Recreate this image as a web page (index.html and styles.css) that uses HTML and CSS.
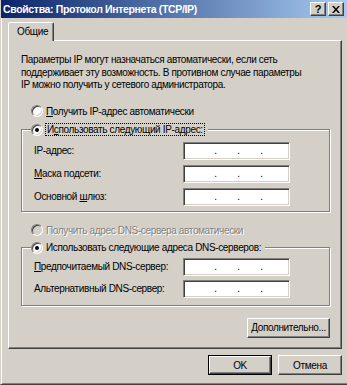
FILE: index.html
```html
<!DOCTYPE html>
<html lang="ru">
<head>
  <meta charset="UTF-8">
  <title>Свойства: Протокол Интернета (TCP/IP)</title>
  <link rel="stylesheet" href="styles.css">
</head>
<body>
  <div class="window">
    <div class="titlebar">
      <span class="title">Свойства: Протокол Интернета (TCP/IP)</span>
      <div class="tbtns">
        <span class="tbtn help">?</span>
        <span class="tbtn">
          <svg width="8" height="7" viewBox="0 0 8 7"><path d="M0 0h2l2 2.5L6 0h2L5 3.5 8 7H6L4 4.5 2 7H0l3-3.5z" fill="#000"/></svg>
        </span>
      </div>
    </div>

    <div class="content">
      <div class="tabs"><div class="tab">Общие</div></div>

      <div class="panel">
        <p class="info">Параметры IP могут назначаться автоматически, если сеть<br>поддерживает эту возможность. В противном случае параметры<br>IP можно получить у сетевого администратора.</p>

        <label class="radio-row"><span class="radio"></span><span><u>П</u>олучить IP-адрес автоматически</span></label>

        <fieldset class="group">
          <legend><span class="radio on"></span><span class="focus">И<u>с</u>пользовать следующий IP-адрес:</span></legend>
          <div class="field-row first"><span>IP-адрес:</span><span class="ip"><i>.</i><i>.</i><i>.</i></span></div>
          <div class="field-row"><span><u>М</u>аска подсети:</span><span class="ip"><i>.</i><i>.</i><i>.</i></span></div>
          <div class="field-row"><span>Основной <u>ш</u>люз:</span><span class="ip"><i>.</i><i>.</i><i>.</i></span></div>
        </fieldset>

        <label class="radio-row disabled"><span class="radio off"></span><span>Получить адрес DNS-сервера автоматически</span></label>

        <fieldset class="group dns">
          <legend><span class="radio on"></span><span>Использовать следующие адреса DNS-серверов:</span></legend>
          <div class="field-row first"><span><u>П</u>редпочитаемый DNS-сервер:</span><span class="ip"><i>.</i><i>.</i><i>.</i></span></div>
          <div class="field-row"><span>Альтернативный DNS-сервер:</span><span class="ip"><i>.</i><i>.</i><i>.</i></span></div>
        </fieldset>

        <div class="adv-row"><button class="btn adv"><u>Д</u>ополнительно...</button></div>
      </div>

      <div class="buttons">
        <button class="btn default">OK</button>
        <button class="btn">Отмена</button>
      </div>
    </div>
  </div>
</body>
</html>
```

FILE: styles.css
```css
* { margin: 0; padding: 0; box-sizing: border-box; }
body {
  background: #d4d0c8;
  font-family: "Liberation Sans", Arial, sans-serif;
  font-size: 10px;
  letter-spacing: -0.35px;
  color: #000;
  width: 347px; height: 385px; overflow: hidden;
}
.window {
  width: 347px; height: 385px;
  background: #d4d0c8;
  border-left: 1px solid #d4d0c8;
  border-bottom: 1px solid #404040;
  box-shadow: inset 1px 0 0 #fff, inset 0 -1px 0 #808080;
  display: flex; flex-direction: column;
}
.titlebar {
  height: 18px; flex: none;
  background: linear-gradient(90deg, #0a246a 0%, #a6caf0 100%);
  display: flex; align-items: center; justify-content: space-between;
  padding: 0 3px 0 2px;
}
.title { color: #fff; font-weight: bold; font-size: 10.5px; letter-spacing: -0.35px; }
.tbtns { display: flex; gap: 2px; }
.tbtn {
  width: 16px; height: 14px;
  background: #d4d0c8;
  border: 1px solid; border-color: #fff #404040 #404040 #fff;
  box-shadow: inset -1px -1px 0 #808080;
  display: flex; align-items: center; justify-content: center;
}
.help { font-weight: bold; font-size: 11px; line-height: 1; letter-spacing: 0; }

.content { padding: 4px 5px 0 7px; flex: 1; display: flex; flex-direction: column; }
.tabs { display: flex; height: 18px; position: relative; z-index: 1; }
.tab {
  width: 46px; height: 19px;
  border: 1px solid; border-bottom: none;
  border-color: #fff #404040 transparent #fff;
  border-radius: 2px 2px 0 0;
  box-shadow: inset -1px 0 0 #808080;
  background: #d4d0c8;
  padding: 3px 0 0 8px;
}
.panel {
  height: 309px; flex: none;
  border: 1px solid; border-color: #fff #404040 #404040 #fff;
  box-shadow: inset -1px -1px 0 #808080;
  padding: 13px 11px 0 12px;
  display: flex; flex-direction: column;
}
.info { line-height: 12.5px; white-space: nowrap; }

.radio-row { display: flex; align-items: center; gap: 3px; margin: 13px 0 0 10px; height: 13px; white-space: nowrap; }
.radio {
  width: 12px; height: 12px; border-radius: 50%;
  background: #fff;
  border: 1px solid; border-color: #808080 #fff #fff #808080;
  box-shadow: inset 1px 1px 0 #404040, inset -1px -1px 0 #d4d0c8;
  display: inline-flex; align-items: center; justify-content: center;
  flex: none;
}
.radio.on::after { content: ""; width: 4px; height: 4px; border-radius: 50%; background: #000; }
.radio.off { background: #d4d0c8; }
.disabled { color: #808080; text-shadow: 1px 1px 0 #fff; margin-top: 12px; }

.group {
  margin-top: 5px;
  width: 309px;
  border: 1px solid #808080;
  box-shadow: inset 1px 1px 0 #fff, 1px 1px 0 #fff;
  padding: 0 0 5px 12px;
}
.group legend {
  display: flex; align-items: center; gap: 3px;
  padding: 0 4px 0 0; margin-left: -3px;
  background: #d4d0c8; white-space: nowrap; height: 14px;
}
.focus { outline: 1px dotted #000; outline-offset: 0; padding: 0 1px; }

.field-row {
  display: flex; align-items: center; justify-content: space-between;
  height: 18px; margin-top: 5px; padding-right: 39px; white-space: nowrap;
}
.field-row.first { margin-top: 5px; }
.dns { margin-top: 4px; padding-bottom: 7px; }
.dns .field-row.first { margin-top: 3px; }
.dns .field-row { margin-top: 4px; }
.ip {
  width: 107px; height: 18px;
  background: #fff;
  border: 1px solid; border-color: #808080 #fff #fff #808080;
  box-shadow: inset 1px 1px 0 #404040, inset -1px -1px 0 #d4d0c8;
  display: flex; justify-content: space-around; padding: 0 16px 0 20px;
}
.ip i { font-style: normal; line-height: 16px; }

.adv-row { display: flex; justify-content: flex-end; margin-top: 12px; padding-right: 0; }
.btn {
  font-family: inherit; font-size: 10px; letter-spacing: -0.35px; color: #000;
  background: #d4d0c8;
  border: 1px solid; border-color: #fff #404040 #404040 #fff;
  box-shadow: inset -1px -1px 0 #808080;
  height: 20px; white-space: nowrap;
}
.adv { width: 83px; }
.buttons { display: flex; justify-content: flex-end; gap: 6px; margin-top: 6px; }
.buttons .btn { width: 64px; height: 20px; }
.btn.default { outline: 1px solid #000; outline-offset: -1px; border-width: 2px; }
```
